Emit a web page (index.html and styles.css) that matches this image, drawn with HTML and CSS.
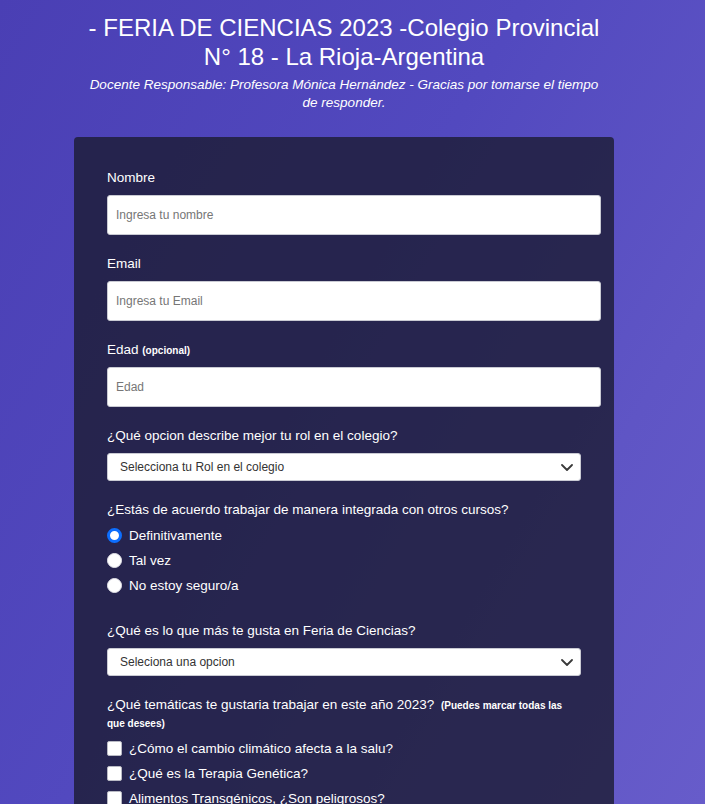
FILE: index.html
```html
<!DOCTYPE html>
<html lang="es">
<head>
<meta charset="utf-8">
<title>Feria de Ciencias 2023</title>
<link rel="stylesheet" href="styles.css">
</head>
<body>
<div class="page">
  <header class="header">
    <h1 class="title">- FERIA DE CIENCIAS 2023 -Colegio Provincial N° 18 - La Rioja-Argentina</h1>
    <p class="description">Docente Responsable: Profesora Mónica Hernández - Gracias por tomarse el tiempo de responder.</p>
  </header>

  <form class="card">
    <div class="group">
      <label class="label" for="name">Nombre</label>
      <input class="text-input" id="name" type="text" placeholder="Ingresa tu nombre">
    </div>

    <div class="group">
      <label class="label" for="email">Email</label>
      <input class="text-input" id="email" type="email" placeholder="Ingresa tu Email">
    </div>

    <div class="group">
      <label class="label" for="age">Edad <span class="hint">(opcional)</span></label>
      <input class="text-input" id="age" type="number" placeholder="Edad">
    </div>

    <div class="group">
      <label class="label" for="role">¿Qué opcion describe mejor tu rol en el colegio?</label>
      <div class="select-wrap">
        <select class="select" id="role">
          <option>Selecciona tu Rol en el colegio</option>
          <option>Estudiante</option>
          <option>Docente</option>
          <option>Otro</option>
        </select>
        <svg class="chevron" width="12" height="7" viewBox="0 0 12 7" aria-hidden="true"><path d="M1 1l5 5 5-5" fill="none" stroke="#3a3a3a" stroke-width="1.8" stroke-linecap="round" stroke-linejoin="round"/></svg>
      </div>
    </div>

    <div class="group group-choices">
      <p class="label label-tight">¿Estás de acuerdo trabajar de manera integrada con otros cursos?</p>
      <label class="option"><input class="radio" type="radio" name="agree" checked>Definitivamente</label>
      <label class="option"><input class="radio" type="radio" name="agree">Tal vez</label>
      <label class="option"><input class="radio" type="radio" name="agree">No estoy seguro/a</label>
    </div>

    <div class="group">
      <label class="label" for="likes">¿Qué es lo que más te gusta en Feria de Ciencias?</label>
      <div class="select-wrap">
        <select class="select" id="likes">
          <option>Seleciona una opcion</option>
          <option>Investigar</option>
          <option>Exponer</option>
          <option>Trabajar en equipo</option>
        </select>
        <svg class="chevron" width="12" height="7" viewBox="0 0 12 7" aria-hidden="true"><path d="M1 1l5 5 5-5" fill="none" stroke="#3a3a3a" stroke-width="1.8" stroke-linecap="round" stroke-linejoin="round"/></svg>
      </div>
    </div>

    <div class="group group-choices">
      <p class="label label-tight">¿Qué temáticas te gustaria trabajar en este año 2023? <span class="hint hint-wide">(Puedes marcar todas las que desees)</span></p>
      <label class="option"><input class="check" type="checkbox">¿Cómo el cambio climático afecta a la salu?</label>
      <label class="option"><input class="check" type="checkbox">¿Qué es la Terapia Genética?</label>
      <label class="option"><input class="check" type="checkbox">Alimentos Transgénicos, ¿Son peligrosos?</label>
      <label class="option"><input class="check" type="checkbox">Energías renovables</label>
    </div>

    <div class="group">
      <label class="label" for="comments">Comentarios o sugerencias</label>
      <textarea class="textarea" id="comments" placeholder="Escribe tu comentario..."></textarea>
    </div>

    <button class="submit" type="submit">Enviar</button>
  </form>
</div>
</body>
</html>
```

FILE: styles.css
```css
html {
  min-height: 100%;
  background: linear-gradient(120deg, #4a3fb4 0%, #5249bf 45%, #5f55c5 75%, #675cca 100%) fixed;
}

body {
  margin: 0;
  font-family: "Liberation Sans", Arial, sans-serif;
  color: #ffffff;
}

.page {
  width: 688px;
  padding: 13px 0 40px;
}

.header {
  width: 520px;
  margin: 0 auto;
  text-align: center;
}

.title {
  margin: 0;
  font-size: 24px;
  font-weight: 400;
  line-height: 29px;
}

.description {
  margin: 5px 0 0;
  font-size: 13.5px;
  font-style: italic;
  line-height: 18px;
}

.card {
  box-sizing: border-box;
  width: 540px;
  margin: 25px auto 0;
  padding: 32px 33px 30px;
  background: rgba(27, 27, 50, 0.8);
  border-radius: 4px;
}

.group {
  margin: 0 0 20px;
}

.group-choices {
  margin-bottom: 24px;
}

.label {
  display: block;
  margin: 0 0 8px;
  font-size: 13.5px;
  line-height: 18px;
}

.label-tight {
  margin-bottom: 4px;
}

.hint {
  font-size: 10px;
  font-weight: 700;
  line-height: 1;
}

.hint-wide {
  margin-left: 3px;
}

.text-input {
  display: block;
  box-sizing: content-box;
  width: 100%;
  height: 38px;
  margin: 0;
  padding: 0 10px 0 8px;
  border: 1px solid #c9cad3;
  border-radius: 3px;
  background: #ffffff;
  color: #333333;
  font-family: inherit;
  font-size: 12px;
  outline: none;
}

.text-input::placeholder {
  color: #767676;
}

.select-wrap {
  position: relative;
}

.select {
  display: block;
  box-sizing: border-box;
  width: 100%;
  height: 28px;
  margin: 0;
  padding: 0 30px 0 12px;
  border: 1px solid #c9cad3;
  border-radius: 3px;
  background: #ffffff;
  color: #333333;
  font-family: inherit;
  font-size: 12px;
  -webkit-appearance: none;
  appearance: none;
  outline: none;
}

.chevron {
  position: absolute;
  right: 8px;
  top: 11px;
  pointer-events: none;
}

.option {
  display: flex;
  align-items: center;
  height: 25px;
  font-size: 13.5px;
}

.radio,
.check {
  -webkit-appearance: none;
  appearance: none;
  flex: none;
  box-sizing: border-box;
  width: 15px;
  height: 15px;
  margin: 0 7px 0 0;
  background: #ffffff;
}

.radio {
  border-radius: 50%;
  border: 1px solid #e4e4ea;
}

.radio:checked {
  border: 3.5px solid #0d6efd;
}

.check {
  border: 1px solid #b9bac4;
  border-radius: 2px;
}

.textarea {
  display: block;
  box-sizing: border-box;
  width: 100%;
  height: 90px;
  padding: 8px;
  border: 1px solid #c9cad3;
  border-radius: 3px;
  font-family: inherit;
  font-size: 12px;
  resize: vertical;
}

.submit {
  display: block;
  width: 100%;
  height: 40px;
  border: 0;
  border-radius: 3px;
  background: #37af65;
  color: #ffffff;
  font-family: inherit;
  font-size: 15px;
}
```
